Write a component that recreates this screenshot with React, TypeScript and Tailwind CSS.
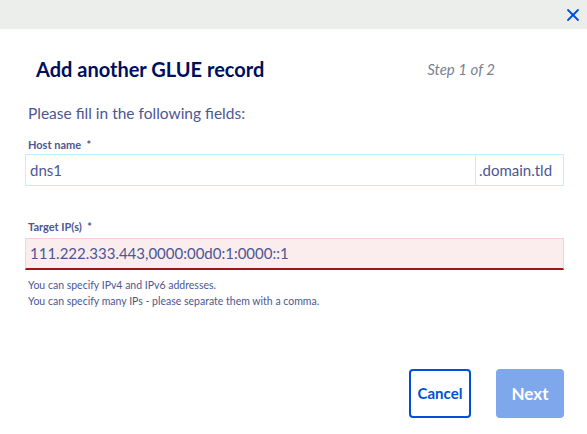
import { X } from 'lucide-react';

const App = () => {
  return (
    <div className="w-[587px] h-[434px] bg-white flex flex-col font-['Lato',sans-serif] text-[#4d5693]">
      <div className="h-[29px] bg-[#eceeec] flex items-center justify-end pr-[4px]">
        <X className="w-[20px] h-[20px] text-[#0050d7]" strokeWidth={2.2} />
      </div>

      <div className="flex items-center justify-between pl-[36px] pr-[92px] pt-[28px]">
        <h1 className="text-[20px] font-bold text-[#000e5c] leading-[24px]">Add another GLUE record</h1>
        <span className="text-[15px] italic text-[#7a7f94]">Step 1 of 2</span>
      </div>

      <div className="pl-[25px] pr-[23px] pt-[22px] flex flex-col">
        <p className="text-[15.5px] pl-[3px] leading-[20px]">Please fill in the following fields:</p>

        <label className="text-[11px] font-bold pl-[3px] mt-[15px] leading-[14px]">Host name&nbsp;&nbsp;*</label>
        <div className="mt-[2px] h-[32px] flex border border-[#bef1ff]">
          <div className="flex-1 flex items-center pl-[4px] text-[15px]">dns1</div>
          <div className="w-[88px] border-l border-[#bef1ff] flex items-center pl-[3px] text-[15px]">.domain.tld</div>
        </div>

        <label className="text-[11px] font-bold pl-[3px] mt-[34px] leading-[14px]">Target IP(s)&nbsp;&nbsp;*</label>
        <div className="mt-[4px] h-[32px] flex items-center bg-[#fbeded] border border-[#ffccd9] border-b-2 border-b-[#a0151b] pl-[4px] text-[15px]">
          111.222.333.443,0000:00d0:1:0000::1
        </div>

        <div className="mt-[7px] pl-[3px] text-[10.5px] leading-[16px]">
          <p>You can specify IPv4 and IPv6 addresses.</p>
          <p>You can specify many IPs - please separate them with a comma.</p>
        </div>

        <div className="mt-[60px] flex justify-end gap-[25px]">
          <button className="w-[62px] h-[49px] rounded-[4px] border-2 border-[#0050d7] text-[#0050d7] text-[15px] font-bold flex items-center justify-center">
            Cancel
          </button>
          <button className="w-[68px] h-[49px] rounded-[4px] bg-[#7fa7ec] text-white text-[17px] font-bold flex items-center justify-center">
            Next
          </button>
        </div>
      </div>
    </div>
  );
};

export default App;
